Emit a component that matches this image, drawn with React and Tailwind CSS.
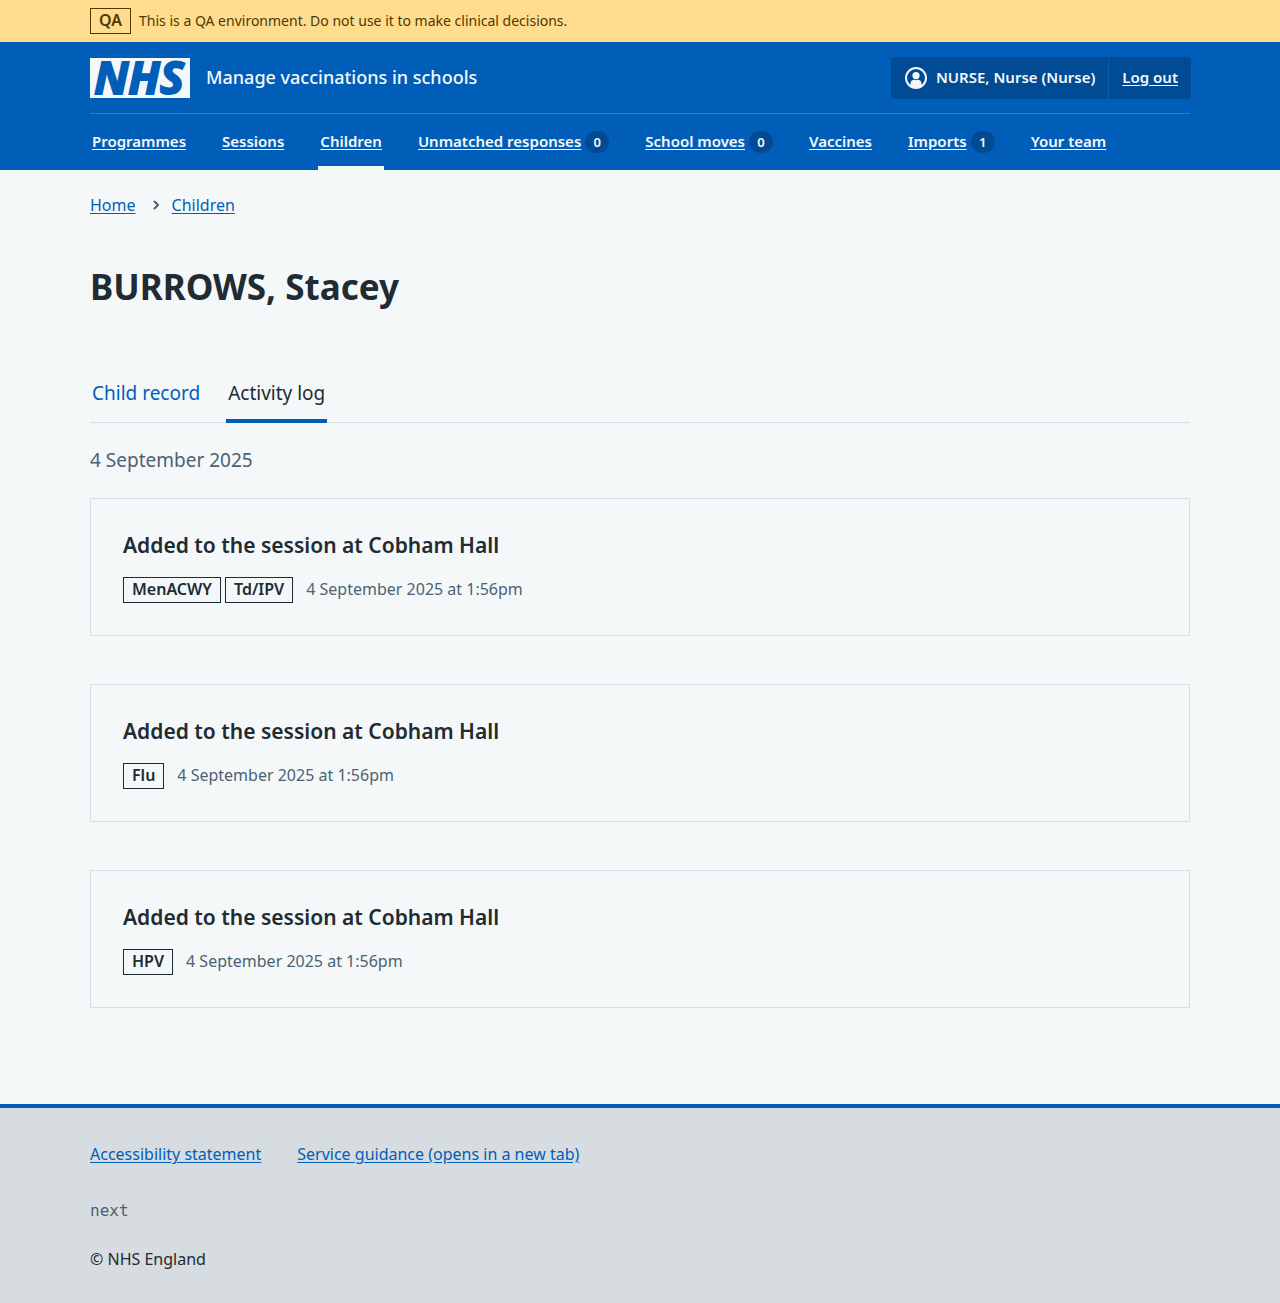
const navItems = [
  { label: "Programmes" },
  { label: "Sessions" },
  { label: "Children", current: true },
  { label: "Unmatched responses", count: 0 },
  { label: "School moves", count: 0 },
  { label: "Vaccines" },
  { label: "Imports", count: 1 },
  { label: "Your team" },
];

const events = [
  { id: 1, programmes: ["MenACWY", "Td/IPV"] },
  { id: 2, programmes: ["Flu"] },
  { id: 3, programmes: ["HPV"] },
];

function Container({ className = "", children }) {
  return <div className={`mx-auto w-full max-w-[1100px] ${className}`}>{children}</div>;
}

function Logo() {
  return (
    <a href="#" aria-label="NHS" className="block h-10 w-[100px] shrink-0 bg-[#f4f8f9]">
      <svg viewBox="0 0 100 40" className="block size-full overflow-visible" aria-hidden="true">
        <text
          x="49"
          y="36"
          textAnchor="middle"
          className="fill-[#005eb8] stroke-[#005eb8] stroke-2 text-[45px] font-bold italic"
        >
          NHS
        </text>
      </svg>
    </a>
  );
}

function UserIcon() {
  return (
    <svg className="size-6 shrink-0" viewBox="0 0 24 24" fill="none" aria-hidden="true">
      <circle cx="12" cy="12" r="10" stroke="currentColor" strokeWidth="2" />
      <circle cx="12" cy="9.6" r="3.6" fill="currentColor" />
      <path d="M6.4 20.2v-2.2c0-2.7 1.8-4.2 4-4.2.5.3 1 .4 1.600.4s1.100-.1 1.600-.4c2.200 0 4 1.500 4 4.200v2.200A10 10 0 0 1 12 22a10 10 0 0 1-5.600-1.800Z" fill="currentColor" />
    </svg>
  );
}

function Tag({ children }) {
  return (
    <strong className="border border-current px-2 pb-px text-base leading-[23px] font-semibold">{children}</strong>
  );
}

function Header() {
  return (
    <header className="bg-[#005eb8] text-[#f4f8f9]">
      <Container>
        <div className="flex items-center justify-between border-b border-white/20 pt-[15px] pb-3.5">
          <div className="flex items-center gap-4">
            <Logo />
            <a href="#" className="pb-0.5 text-lg leading-7 font-medium">Manage vaccinations in schools</a>
          </div>
          <div className="-mr-px flex h-[42px] items-stretch rounded bg-[#004b93] text-[15px] leading-6 font-semibold">
            <span className="flex items-center gap-2 border-r border-[#005eb8] px-[13px]">
              <UserIcon />
              <span className="pb-0.5">NURSE, Nurse (Nurse)</span>
            </span>
            <a href="#" className="flex items-center px-[13px] pb-0.5 underline underline-offset-2">Log out</a>
          </div>
        </div>
        <nav aria-label="Menu">
          <ul className="flex gap-8">
            {navItems.map(({ label, count, current }) => (
              <li
                key={label}
                className={`flex h-14 items-center gap-1 border-b-4 px-0.5 pt-1 text-[15px] leading-6 font-semibold ${current ? "border-[#f4f8f9]" : "border-transparent"}`}
              >
                <a href="#" aria-current={current ? "page" : undefined} className="pb-0.5 whitespace-nowrap underline underline-offset-2">
                  {label}
                </a>
                {count !== undefined && (
                  <span className="flex h-[22px] w-6 items-center justify-center rounded-full bg-[#004b93] text-[13px]">{count}</span>
                )}
              </li>
            ))}
          </ul>
        </nav>
      </Container>
    </header>
  );
}

function EventCard({ programmes }) {
  return (
    <article className="border border-[#d7dce0] p-8 pt-[30px]">
      <h3 className="text-[21px] leading-8 font-semibold">Added to the session at Cobham Hall</h3>
      <p className="mt-4 flex items-center">
        <span className="mr-[13px] flex gap-1">
          {programmes.map((name) => (
            <Tag key={name}>{name}</Tag>
          ))}
        </span>
        <span className="pb-0.5 text-base leading-6 text-[#4c6272]">4 September 2025 at 1:56pm</span>
      </p>
    </article>
  );
}

export default function App() {
  return (
    <div className="min-h-screen bg-[#f4f8f9] font-['Noto_Sans',sans-serif] text-[#212b32]">
      <div className="bg-[#ffdc8e] py-2 text-[#4d3a00]">
        <Container className="flex items-center gap-2">
          <Tag>QA</Tag>
          <span className="text-sm leading-6">This is a QA environment. Do not use it to make clinical decisions.</span>
        </Container>
      </div>

      <Header />

      <Container>
        <nav aria-label="Breadcrumb" className="pt-[23px]">
          <ol className="flex items-center text-base leading-6 text-[#005eb8]">
            <li><a href="#" className="underline underline-offset-2">Home</a></li>
            <li className="ml-4 flex items-center gap-3">
              <svg className="h-3 w-2 text-[#4c6272]" viewBox="0 0 8 12" fill="none" aria-hidden="true">
                <path d="m2.5 2.5 3.5 3.5-3.5 3.5" stroke="currentColor" strokeWidth="2" strokeLinecap="round" strokeLinejoin="round" />
              </svg>
              <a href="#" className="underline underline-offset-2">Children</a>
            </li>
          </ol>
        </nav>

        <main className="pt-[42px] pb-24">
          <h1 className="text-[35px] leading-[56px] font-bold">BURROWS, Stacey</h1>

          <nav aria-label="Secondary" className="mt-12 border-b border-[#d7dce0]">
            <ul className="-mb-px flex gap-6 text-[19px] leading-7">
              <li className="border-b-4 border-transparent px-0.5 pt-4 pb-3">
                <a href="#" className="text-[#005eb8]">Child record</a>
              </li>
              <li className="border-b-4 border-[#005eb8] px-0.5 pt-4 pb-3">
                <a href="#" aria-current="page">Activity log</a>
              </li>
            </ul>
          </nav>

          <h2 className="mt-[23px] mb-6 text-[19px] leading-7 text-[#4c6272]">4 September 2025</h2>

          <div className="flex flex-col gap-12">
            {events.map((event) => (
              <EventCard key={event.id} programmes={event.programmes} />
            ))}
          </div>
        </main>
      </Container>

      <footer className="border-t-4 border-[#005eb8] bg-[#d7dce0] text-base leading-6">
        <Container className="pt-[34px] pb-8">
          <ul className="flex gap-9 text-[#005eb8]">
            <li><a href="#" className="underline underline-offset-2">Accessibility statement</a></li>
            <li><a href="#" className="underline underline-offset-2">Service guidance (opens in a new tab)</a></li>
          </ul>
          <p className="mt-[33px] font-['DejaVu_Sans_Mono',monospace] text-base text-[#4c6272]">next</p>
          <p className="mt-6">© NHS England</p>
        </Container>
      </footer>
    </div>
  );
}
